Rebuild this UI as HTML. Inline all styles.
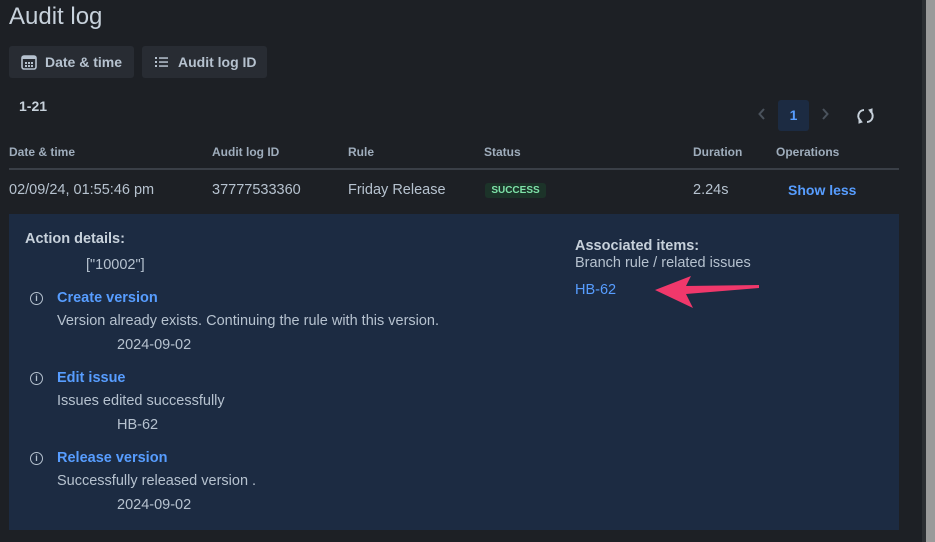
<!DOCTYPE html>
<html><head><style>
body{margin:0;width:935px;height:542px;background:#1d2025;font-family:"Liberation Sans",sans-serif;color:#b6c2cf;position:relative;overflow:hidden;font-size:14.5px}
.a{position:absolute;white-space:nowrap}
.btn{position:absolute;top:46px;height:32px;background:#282c33;border-radius:3px;color:#b6c2cf;font-size:14px;font-weight:bold;line-height:32px}
.h{font-size:12px;font-weight:bold;color:#9fadbc;top:145px}
.r{top:182px;font-size:14.5px;color:#b6c2cf}
.lk{color:#579dff;font-weight:bold}
.ic{position:absolute;left:30px;width:11px;height:11px;border:1.4px solid #b6c2cf;border-radius:50%;font-size:9px;line-height:11px;text-align:center;font-weight:bold;color:#b6c2cf}
</style></head><body>
<div class="a" style="left:9px;top:3px;font-size:24px;color:#c7d1db">Audit log</div>
<div class="btn" style="left:9px;width:125px">
<svg style="position:absolute;left:11px;top:7px" width="18" height="18" viewBox="0 0 18 18"><rect x="2" y="3" width="14" height="13" rx="2" fill="none" stroke="#b6c2cf" stroke-width="1.6"/><rect x="2" y="3" width="14" height="3" fill="#b6c2cf"/><g fill="#b6c2cf"><rect x="5" y="9" width="2" height="2"/><rect x="8" y="9" width="2" height="2"/><rect x="11" y="9" width="2" height="2"/><rect x="5" y="12" width="2" height="2"/><rect x="8" y="12" width="2" height="2"/><rect x="11" y="12" width="2" height="2"/></g></svg>
<span style="position:absolute;left:36px">Date &amp; time</span></div>
<div class="btn" style="left:142px;width:125px">
<svg style="position:absolute;left:13px;top:10px" width="14" height="12" viewBox="0 0 14 12"><g fill="#b6c2cf"><rect x="0" y="1" width="2" height="2"/><rect x="0" y="5" width="2" height="2"/><rect x="0" y="9" width="2" height="2"/><rect x="4" y="1.3" width="9" height="1.5"/><rect x="4" y="5.3" width="9" height="1.5"/><rect x="4" y="9.3" width="9" height="1.5"/></g></svg>
<span style="position:absolute;left:36px">Audit log ID</span></div>
<div class="a" style="left:19px;top:98px;font-weight:bold;font-size:14px;color:#c7d1db">1-21</div>
<svg class="a" style="left:758px;top:108px" width="8" height="12" viewBox="0 0 8 12"><path d="M6 1 L1.5 6 L6 11" fill="none" stroke="#4a525c" stroke-width="2"/></svg>
<div class="a" style="left:778px;top:100px;width:31px;height:31px;background:#1c2b42;border-radius:3px;color:#579dff;font-weight:bold;text-align:center;line-height:31px;font-size:14px">1</div>
<svg class="a" style="left:821px;top:108px" width="8" height="12" viewBox="0 0 8 12"><path d="M2 1 L6.5 6 L2 11" fill="none" stroke="#4a525c" stroke-width="2"/></svg>
<svg class="a" style="left:856px;top:107px" width="19" height="18" viewBox="0 0 19 18"><path d="M8 3 A6 6 0 0 0 5 14 M11 15 A6 6 0 0 0 14 4" fill="none" stroke="#c7d1db" stroke-width="2"/><path d="M3 12 L6 15 L3 16Z M16 6 L13 3 L16 2Z" fill="#c7d1db" stroke="#c7d1db"/></svg>
<div class="a h" style="left:9px">Date &amp; time</div>
<div class="a h" style="left:212px">Audit log ID</div>
<div class="a h" style="left:348px">Rule</div>
<div class="a h" style="left:484px">Status</div>
<div class="a h" style="left:693px">Duration</div>
<div class="a h" style="left:776px">Operations</div>
<div class="a" style="left:9px;top:168px;width:890px;height:2px;background:#3a3f47"></div>
<div class="a r" style="left:9px">02/09/24, 01:55:46 pm</div>
<div class="a r" style="left:212px">37777533360</div>
<div class="a r" style="left:348px">Friday Release</div>
<div class="a" style="left:485px;top:183px;width:61px;height:15px;background:#1c3329;border-radius:3px;color:#7ee2a8;font-size:10px;font-weight:bold;text-align:center;line-height:15px">SUCCESS</div>
<div class="a r" style="left:693px">2.24s</div>
<div class="a r lk" style="left:788px;font-size:14px">Show less</div>
<div class="a" style="left:9px;top:214px;width:890px;height:316px;background:#1c2b42"></div>
<div class="a" style="left:25px;top:231px;font-weight:bold;color:#c7d1db">Action details:</div>
<div class="a" style="left:86px;top:257px">["10002"]</div>
<div class="ic" style="top:292px">i</div>
<div class="a lk" style="left:57px;top:290px">Create version</div>
<div class="a" style="left:57px;top:313px">Version already exists. Continuing the rule with this version.</div>
<div class="a" style="left:117px;top:337px">2024-09-02</div>
<div class="ic" style="top:372px">i</div>
<div class="a lk" style="left:57px;top:370px">Edit issue</div>
<div class="a" style="left:57px;top:393px">Issues edited successfully</div>
<div class="a" style="left:117px;top:417px">HB-62</div>
<div class="ic" style="top:452px">i</div>
<div class="a lk" style="left:57px;top:450px">Release version</div>
<div class="a" style="left:57px;top:473px">Successfully released version .</div>
<div class="a" style="left:117px;top:497px">2024-09-02</div>
<div class="a" style="left:575px;top:238px;font-weight:bold;color:#c7d1db">Associated items:</div>
<div class="a" style="left:575px;top:255px">Branch rule / related issues</div>
<div class="a" style="left:575px;top:282px;color:#579dff">HB-62</div>
<svg class="a" style="left:655px;top:274px" width="108" height="36" viewBox="0 0 108 36"><path d="M0 16 L36 2 L31 12 L104 11 L104 14 L31 20 L38 34 Z" fill="#f0386b"/></svg>
<div class="a" style="left:922px;top:0;width:4px;height:542px;background:#2c2f33"></div>
<div class="a" style="left:926px;top:0;width:9px;height:542px;background:#9a9a9a"></div>
</body></html>
